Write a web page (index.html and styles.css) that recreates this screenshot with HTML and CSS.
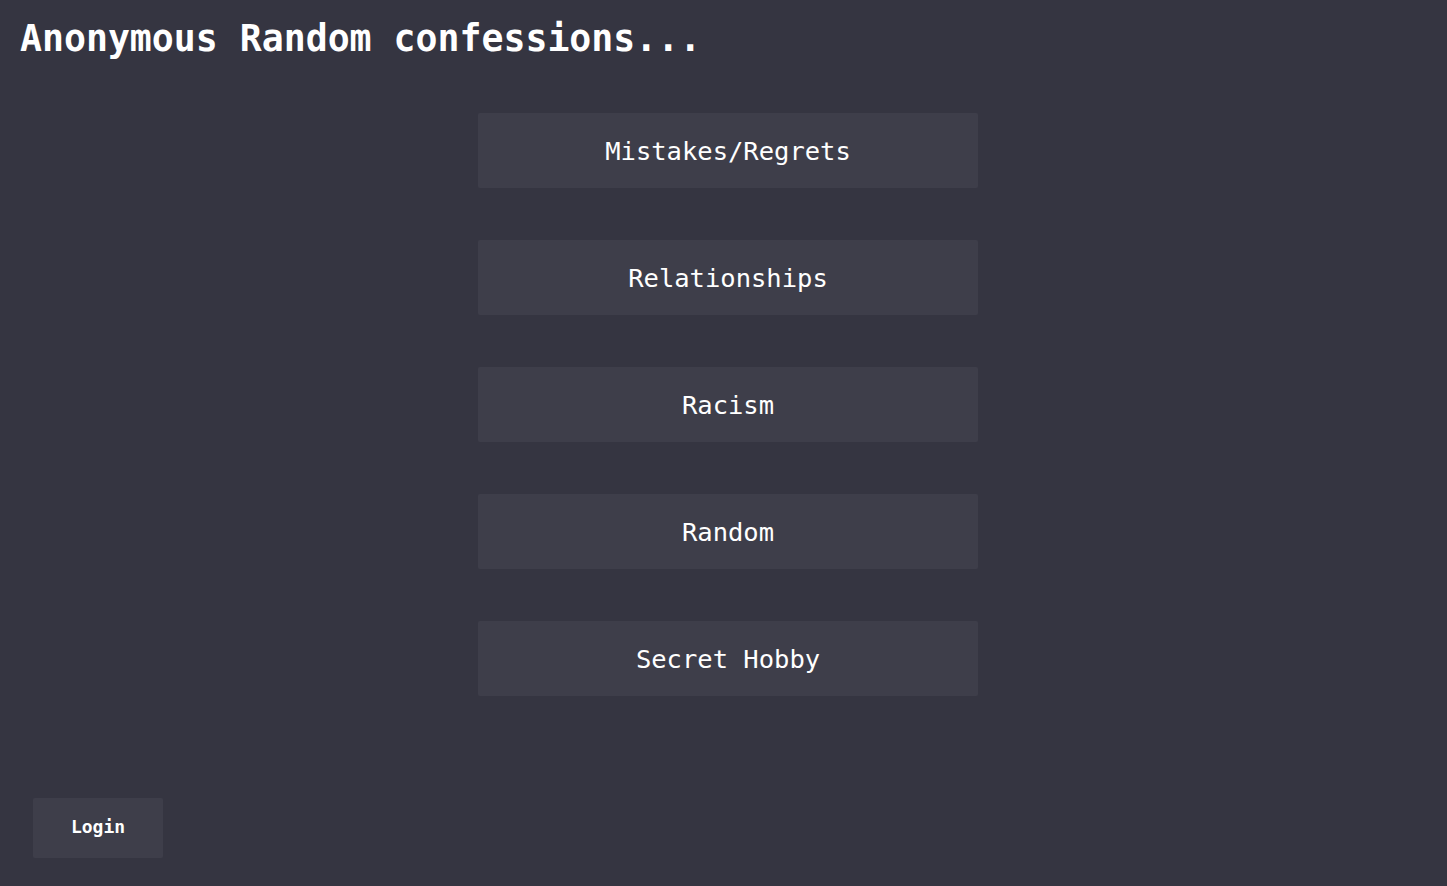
FILE: index.html
```html
<!DOCTYPE html>
<html lang="en">
<head>
<meta charset="utf-8">
<title>Anonymous Random confessions</title>
<link rel="stylesheet" href="styles.css">
</head>
<body>
<header class="header">
  <h1 class="title">Anonymous Random confessions...</h1>
</header>
<main class="categories">
  <a class="category" href="#">Mistakes/Regrets</a>
  <a class="category" href="#">Relationships</a>
  <a class="category" href="#">Racism</a>
  <a class="category" href="#">Random</a>
  <a class="category" href="#">Secret Hobby</a>
</main>
<footer class="footer">
  <button class="login" type="button">Login</button>
</footer>
</body>
</html>
```

FILE: styles.css
```css
html, body {
  margin: 0;
  padding: 0;
}
body {
  background: #353541;
  color: #ffffff;
  font-family: "DejaVu Sans Mono", "Liberation Mono", monospace;
  min-height: 886px;
}
.header {
  padding: 17px 0 0 20px;
}
.title {
  margin: 0;
  font-size: 36.5px;
  line-height: 44px;
  font-weight: bold;
}
.categories {
  display: flex;
  flex-direction: column;
  align-items: center;
  gap: 52px;
  margin-top: 52px;
  padding-left: 9px;
}
.category {
  display: flex;
  align-items: center;
  justify-content: center;
  width: 500px;
  height: 75px;
  background: #3e3e4a;
  border-radius: 2px;
  color: #ffffff;
  text-decoration: none;
  font-size: 25.5px;
}
.footer {
  padding: 102px 0 0 33px;
}
.login {
  width: 130px;
  height: 60px;
  background: #3e3e4a;
  border: none;
  border-radius: 2px;
  color: #ffffff;
  font-family: "DejaVu Sans Mono", "Liberation Mono", monospace;
  font-weight: bold;
  font-size: 18px;
  line-height: 20px;
  padding: 0 0 2px;
}
```
